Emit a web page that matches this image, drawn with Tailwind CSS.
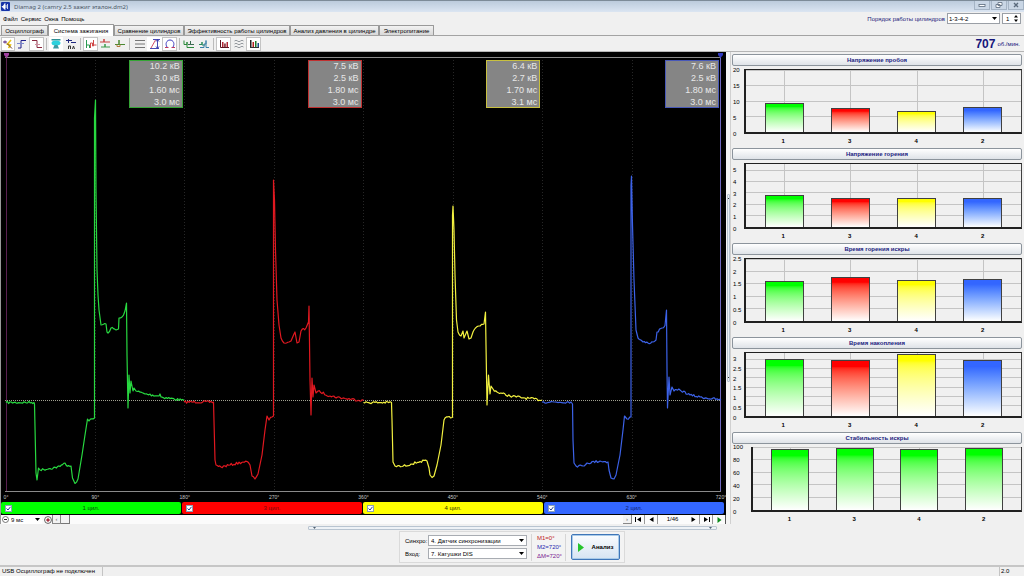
<!DOCTYPE html>
<html lang="ru">
<head>
<meta charset="utf-8">
<title>Diamag 2</title>
<script src="https://cdn.jsdelivr.net/npm/@tailwindcss/browser@4"></script>
</head>
<body>
<div class="flex h-screen w-full flex-col overflow-hidden bg-[#f0f0f0] text-[6px] leading-[8px] text-black" style="font-family:'Liberation Sans',Arial,sans-serif">

  <!-- title bar -->
  <header class="flex h-3 shrink-0 items-center border-t border-[#7d8b98] bg-linear-to-b from-[#bccbdc] to-[#dbe5f2] pl-px">
    <svg class="h-[9px] w-[9px]" viewBox="0 0 9 9"><rect width="9" height="9" rx="1" fill="#1733a8"/><path d="M1 4.500h1L4 1.500v6zM5 3v3M6.500 2v5" stroke="#fff" stroke-width=".8" fill="#fff"/></svg>
    <h1 class="ml-1 flex-1 text-[6px] text-[#4c5868]" style="font-family:'Noto Sans',sans-serif">Diamag 2 (camry 2.5 зажиг эталон.dm2)</h1>
    <div class="flex h-[9px] gap-px self-start text-[#5a6a7c]">
      <button aria-label="Свернуть" class="grid w-4 place-items-center border border-t-0 border-[#a5b4c5] bg-[#c9d6e5]"><svg class="h-[6px] w-[8px]" viewBox="0 0 8 6"><rect x="1" y="2.5" width="6" height="2" fill="#fff" stroke="currentColor" stroke-width=".8"/></svg></button>
      <button aria-label="Восстановить" class="grid w-4 place-items-center border border-t-0 border-[#a5b4c5] bg-[#c9d6e5]"><svg class="h-[6px] w-[8px]" viewBox="0 0 8 6"><path d="M3 .5h4v3H3zM1 2.500h4v3H1z" fill="#fff" stroke="currentColor" stroke-width=".8"/></svg></button>
      <button aria-label="Закрыть" class="grid w-4 place-items-center border border-t-0 border-[#a5b4c5] bg-[#c9d6e5]"><svg class="h-[6px] w-[8px]" viewBox="0 0 8 6"><path d="M2 1l4 4M6 1L2 5" stroke="currentColor" stroke-width="1.400"/></svg></button>
    </div>
  </header>

  <!-- menu and firing order -->
  <div class="flex h-[13px] shrink-0 items-center pl-[3px] pr-[3px]">
    <nav class="flex flex-1 gap-[3px] pt-px">
      <button>Файл</button><button>Сервис</button><button>Окна</button><button>Помощь</button>
    </nav>
    <label for="order" class="mr-[2px] text-[#1b1b7a]">Порядок работы цилиндров</label>
    <div class="relative h-[11px] w-[53px]">
      <select id="order" class="h-full w-full appearance-none border border-[#9a9fa6] bg-white pl-px leading-[8px]"><option>1-3-4-2</option></select>
      <svg class="pointer-events-none absolute top-1 right-[3px] h-[3px] w-[5px]" viewBox="0 0 5 3"><path d="M0 0h5L2.500 3z"/></svg>
    </div>
    <div class="relative ml-[2px] h-[11px] w-[19px]">
      <input aria-label="Цилиндр" value="1" class="h-full w-full border border-[#9a9fa6] bg-white pl-[3px]">
      <svg class="pointer-events-none absolute top-[2px] right-[3px] h-[7px] w-[4px]" viewBox="0 0 4 7"><path d="M0 2.500h4L2 0zM0 4.500h4L2 7z"/></svg>
    </div>
  </div>

  <!-- tabs -->
  <div role="tablist" class="flex h-[11px] shrink-0 items-end border-b border-[#a3a3a3] pl-px">
    <button role="tab" class="h-[10px] w-[47px] whitespace-nowrap rounded-t-[1px] border border-b-0 border-[#999] bg-linear-to-b from-[#f2f2f2] to-[#d8d8d8]">Осциллограф</button>
    <button role="tab" aria-selected="true" class="-mb-px h-3 w-[66px] whitespace-nowrap rounded-t-[1px] border border-b-0 border-[#999] bg-white">Система зажигания</button>
    <button role="tab" class="h-[10px] w-[70px] whitespace-nowrap rounded-t-[1px] border border-b-0 border-[#999] bg-linear-to-b from-[#f2f2f2] to-[#d8d8d8]">Сравнение цилиндров</button>
    <button role="tab" class="h-[10px] w-[106px] whitespace-nowrap rounded-t-[1px] border border-b-0 border-[#999] bg-linear-to-b from-[#f2f2f2] to-[#d8d8d8]">Эффективность работы цилиндров</button>
    <button role="tab" class="h-[10px] w-[89px] whitespace-nowrap rounded-t-[1px] border border-b-0 border-[#999] bg-linear-to-b from-[#f2f2f2] to-[#d8d8d8]">Анализ давления в цилиндре</button>
    <button role="tab" class="h-[10px] w-[55px] whitespace-nowrap rounded-t-[1px] border border-b-0 border-[#999] bg-linear-to-b from-[#f2f2f2] to-[#d8d8d8]">Электропитание</button>
  </div>

  <!-- toolbar -->
  <div class="flex h-4 shrink-0 items-center border-b border-[#b5b5b5] pl-px">
    <div class="flex">
      <button aria-label="Захват" class="grid h-[14px] w-[14px] place-items-center border border-[#c4c4c4] bg-white"><svg class="h-3 w-3" viewBox="0 0 12 12" fill="none"><path d="M1 4h4M3 2.500v3" stroke="#5b2a86"/><path d="M9 2L5.500 6l3 1-2 3" stroke="#e6c31a" stroke-width="1.600"/><path d="M5 5.500l5 5" stroke="#6a3a20"/></svg></button>
      <button aria-label="Фронт" class="grid h-[14px] w-[14px] place-items-center"><svg class="h-3 w-3" viewBox="0 0 12 12" fill="none"><path d="M2 10h3V2.500h5" stroke="#20208c"/><path d="M1 5.500h7" stroke="#7a88d0"/></svg></button>
      <button aria-label="Спад" class="grid h-[14px] w-[15px] place-items-center border border-[#c4c4c4] bg-white"><svg class="h-3 w-3" viewBox="0 0 12 12" fill="none"><path d="M1 2.500h5V9.500h5" stroke="#8a2a40"/><path d="M4 6.500h5" stroke="#d090a0"/></svg></button>
    </div>
    <i class="mx-[2px] h-3 w-px bg-[#bbb]"></i>
    <div class="flex">
      <button aria-label="Монитор" class="grid h-[14px] w-[14px] place-items-center bg-white"><svg class="h-3 w-3" viewBox="0 0 12 12"><rect x="1.500" y="1" width="9" height="1.500" fill="#2f8f95"/><ellipse cx="6" cy="5" rx="4.500" ry="2.500" fill="#2cd0dc"/><path d="M4.500 7h3l1.500 3.500H3z" fill="#3a9aa4"/></svg></button>
      <button aria-label="Автомасштаб" class="grid h-[14px] w-[15px] place-items-center"><svg class="h-3 w-3" viewBox="0 0 12 12" fill="none"><path d="M1 2.500h6M3.500 1v4M6 4.500h5" stroke="#222a80"/><path d="M3.500 11V8h2v3M7.500 11l1-3 1 3" stroke="#333"/></svg></button>
    </div>
    <i class="mx-[2px] h-3 w-px bg-[#bbb]"></i>
    <div class="flex">
      <button aria-label="Импульсы" class="grid h-[14px] w-[15px] place-items-center border border-[#c4c4c4] bg-white"><svg class="h-3 w-3" viewBox="0 0 12 12" fill="none"><path d="M1.500 10V2v5h3v3" stroke="#2a9a50"/><path d="M5.500 10V5h2v3h1V2v5h3" stroke="#d04848"/></svg></button>
      <button aria-label="Наложение" class="grid h-[14px] w-[14px] place-items-center"><svg class="h-3 w-3" viewBox="0 0 12 12" fill="none"><path d="M1 4h4V1v3h6" stroke="#c84040"/><path d="M2 9h4V6v3h5" stroke="#3b9a4a"/></svg></button>
      <button aria-label="Один импульс" class="grid h-[14px] w-[15px] place-items-center"><svg class="h-3 w-3" viewBox="0 0 12 12" fill="none"><path d="M1 6.500h4V2v4.500h6" stroke="#4a8a32"/><path d="M3 6.500v2h3v-2" stroke="#b07a3a"/></svg></button>
    </div>
    <i class="mx-[2px] h-3 w-px bg-[#bbb]"></i>
    <div class="flex">
      <button aria-label="Линии" class="grid h-[14px] w-[15px] place-items-center"><svg class="h-3 w-3" viewBox="0 0 12 12"><path d="M1 2.500h10M1 6h10M1 9.500h10" stroke="#555" stroke-width=".8"/></svg></button>
      <button aria-label="Амплитуда" class="grid h-[14px] w-[15px] place-items-center bg-white"><svg class="h-3 w-3" viewBox="0 0 12 12" fill="none"><path d="M1 10.500h9M4 1.500h7M8.500 2v8M7 8.500l1.500 2 1.500-2M7 3.500l1.500-2 1.500 2" stroke="#3535ab" stroke-width=".9"/><path d="M2 10l4.500-8" stroke="#d2506a"/></svg></button>
      <button aria-label="Цикл" class="grid h-[14px] w-[15px] place-items-center border border-[#c4c4c4] bg-white"><svg class="h-3 w-3" viewBox="0 0 12 12" fill="none"><path d="M3 9C1 6 2.500 2 6 2s5 4 3 7" stroke="#3b3bc0"/><path d="M1 9.500h3.500M7.500 9.500H11" stroke="#c03a60"/></svg></button>
    </div>
    <i class="mx-[2px] h-3 w-px bg-[#bbb]"></i>
    <div class="flex">
      <button aria-label="Эталон" class="grid h-[14px] w-[14px] place-items-center"><svg class="h-3 w-3" viewBox="0 0 12 12" fill="none"><path d="M1 2.500v4h3V4v5.500h7" stroke="#2a8a3a"/><path d="M5 6.500h2.500V3v3.500H11" stroke="#3b6a50"/></svg></button>
      <button aria-label="Сравнить" class="grid h-[14px] w-[15px] place-items-center"><svg class="h-3 w-3" viewBox="0 0 12 12" fill="none"><path d="M1 6.500h3V4v3h3" stroke="#2a8a5a"/><path d="M2 9.500h4V6h2V2.500v7h3" stroke="#3a80a8"/></svg></button>
    </div>
    <i class="mx-[2px] h-3 w-px bg-[#bbb]"></i>
    <div class="flex">
      <button aria-label="Гистограмма" class="grid h-[14px] w-[15px] place-items-center border border-[#c4c4c4] bg-white"><svg class="h-3 w-3" viewBox="0 0 12 12"><path d="M2.500 2v7.500H11" stroke="#5a1420" fill="none"/><path d="M4 4h1.500v5H4zM8.500 4H10v5H8.500z" fill="#b32634"/><path d="M6.200 5.500h1.500V9H6.200z" fill="#702028"/></svg></button>
      <button aria-label="Осциллограммы" class="grid h-[14px] w-[15px] place-items-center"><svg class="h-3 w-3" viewBox="0 0 12 12" fill="none"><path d="M1.500 3q1.500-1.500 3 0t3 0 3 0M1.500 6q1.500-1.500 3 0t3 0 3 0M1.500 9q1.500-1.500 3 0t3 0 3 0" stroke="#8a9095" stroke-width=".9"/></svg></button>
      <button aria-label="Цветные столбцы" class="grid h-[14px] w-[15px] place-items-center border border-[#c4c4c4] bg-white"><svg class="h-3 w-3" viewBox="0 0 12 12"><path d="M2 2h1.500v7H2z" fill="#222"/><path d="M4.500 4H6v5H4.500z" fill="#b32020"/><path d="M7 3h1.500v6H7z" fill="#1c7a2c"/><path d="M9.500 5H11v4H9.500z" fill="#1c4a8c"/><path d="M2 9.500h9" stroke="#333"/></svg></button>
    </div>
    <div class="ml-auto flex items-center gap-[2px] pr-1 text-[#15157a]">
      <strong class="text-[12px] leading-3">707</strong><span class="text-[6px]">об./мин.</span>
    </div>
  </div>

  <!-- work area -->
  <main class="flex min-h-0 flex-1 border-l border-[#9a9a9a]">
    <div class="flex min-w-0 flex-1 flex-col">
      <section class="relative min-h-0 flex-1 bg-black">
        <svg id="scope" class="absolute inset-0 h-full w-full" viewBox="1 52 725 449" preserveAspectRatio="none" fill="none">
          <path d="M95.500 57V491M184.500 57V491M274.500 57V491M363.500 57V491M453.500 57V491M542.500 57V491M632.500 57V491" stroke="#262626" stroke-dasharray="1 2"/>
          <path d="M5 57.500H721M5 491.500H721" stroke="#8a8a8a"/>
          <path d="M5 400.500H721" stroke="#a0a090" stroke-dasharray="1 1"/>
          <path d="M6.500 57V491" stroke="#5a2050"/>
          <path d="M720.500 57V491" stroke="#7068c0"/>
          <path d="M4 53h5v2L6.500 58 4 55z" fill="#a040a0"/>
          <path d="M718 53h5v2L720.500 58 718 55z" fill="#3038c0"/>
        </svg>
        <div class="absolute inset-x-[5px] top-2 grid grid-cols-4 text-right text-[9px] leading-3 text-[#e8e8e8]">
          <div class="ml-auto mr-[2px] w-[54px] bg-[#858585] pr-[3px] ring-1 ring-[#35a535] ring-inset">10.2 кВ<br>3.0 кВ<br>1.60 мс<br>3.0 мс</div>
          <div class="ml-auto mr-[2px] w-[54px] bg-[#858585] pr-[3px] ring-1 ring-[#c03030] ring-inset">7.5 кВ<br>2.5 кВ<br>1.80 мс<br>3.0 мс</div>
          <div class="ml-auto mr-[2px] w-[54px] bg-[#858585] pr-[3px] ring-1 ring-[#c8c040] ring-inset">6.4 кВ<br>2.7 кВ<br>1.70 мс<br>3.1 мс</div>
          <div class="ml-auto mr-[2px] w-[54px] bg-[#858585] pr-[3px] ring-1 ring-[#4858b8] ring-inset">7.6 кВ<br>2.5 кВ<br>1.80 мс<br>3.0 мс</div>
        </div>
        <div class="absolute inset-x-[5px] bottom-0 flex justify-between text-[5px] text-[#c8c8c8]">
          <span class="flex w-0 justify-center">0°</span><span class="flex w-0 justify-center">90°</span><span class="flex w-0 justify-center">180°</span><span class="flex w-0 justify-center">270°</span><span class="flex w-0 justify-center">360°</span><span class="flex w-0 justify-center">450°</span><span class="flex w-0 justify-center">540°</span><span class="flex w-0 justify-center">630°</span><span class="flex w-0 justify-center">720°</span>
        </div>
      </section>

      <!-- cylinder switches -->
      <div class="grid h-[14px] shrink-0 grid-cols-4 gap-px bg-black py-px pr-[2px]">
        <label class="relative flex items-center justify-center rounded-[2px] bg-[#00ff00] text-[#064d06]"><input type="checkbox" checked class="absolute left-1 h-[7px] w-[7px] appearance-none border border-[#8aa0b8] bg-white"><svg class="pointer-events-none absolute left-[5px] h-[5px] w-[5px]" viewBox="0 0 5 5"><path d="M.5 2.500L2 4 4.500.8" stroke="#24408c" fill="none"/></svg>1 цил.</label>
        <label class="relative flex items-center justify-center rounded-[2px] bg-[#ff0000] text-[#7a0a0a]"><input type="checkbox" checked class="absolute left-1 h-[7px] w-[7px] appearance-none border border-[#8aa0b8] bg-white"><svg class="pointer-events-none absolute left-[5px] h-[5px] w-[5px]" viewBox="0 0 5 5"><path d="M.5 2.500L2 4 4.500.8" stroke="#24408c" fill="none"/></svg>3 цил.</label>
        <label class="relative flex items-center justify-center rounded-[2px] bg-[#ffff00] text-[#303000]"><input type="checkbox" checked class="absolute left-1 h-[7px] w-[7px] appearance-none border border-[#8aa0b8] bg-white"><svg class="pointer-events-none absolute left-[5px] h-[5px] w-[5px]" viewBox="0 0 5 5"><path d="M.5 2.500L2 4 4.500.8" stroke="#24408c" fill="none"/></svg>4 цил.</label>
        <label class="relative flex items-center justify-center rounded-[2px] bg-[#3366ff] text-[#10206a]"><input type="checkbox" checked class="absolute left-1 h-[7px] w-[7px] appearance-none border border-[#8aa0b8] bg-white"><svg class="pointer-events-none absolute left-[5px] h-[5px] w-[5px]" viewBox="0 0 5 5"><path d="M.5 2.500L2 4 4.500.8" stroke="#24408c" fill="none"/></svg>2 цил.</label>
      </div>

      <!-- sweep and frame navigation -->
      <div class="flex h-[9px] shrink-0 items-stretch bg-[#fbfbfb]">
        <button aria-label="Уменьшить" class="grid w-2 place-items-center"><svg class="h-[7px] w-[7px]" viewBox="0 0 7 7"><circle cx="3.500" cy="3.500" r="3" fill="#fff" stroke="#555" stroke-width=".8"/><path d="M2 3.500h3" stroke="#222"/></svg></button>
        <div class="relative w-[33px]">
          <select aria-label="Развёртка" class="h-full w-full appearance-none bg-white pl-[2px] leading-[8px]"><option>9 мс</option></select>
          <svg class="pointer-events-none absolute top-[3px] right-[2px] h-[3px] w-[5px]" viewBox="0 0 5 3"><path d="M0 0h5L2.500 3z"/></svg>
        </div>
        <button aria-label="Увеличить" class="ml-px grid w-[9px] place-items-center"><svg class="h-[8px] w-[8px]" viewBox="0 0 7 7"><circle cx="3.500" cy="3.500" r="3" fill="#fff" stroke="#555" stroke-width=".8"/><path d="M2 3.500h3M3.500 2v3" stroke="#a02030" stroke-width="1.200"/></svg></button>
        <button aria-label="Влево" class="w-[9px] border-r border-b border-l border-[#888] bg-[#f3f3f3] text-[#666]">‹</button>
        <div class="w-[9px] border-r border-b border-[#777] bg-[#f3f3f3]"></div>
        <div class="flex-1"></div>
        <button aria-label="Вправо" class="w-[9px] border-r border-b border-[#888] bg-[#f3f3f3] text-[#666]">›</button>
        <button aria-label="Первый" class="grid w-[13px] place-items-center border-r border-[#999]"><svg class="h-[5px] w-[7px]" viewBox="0 0 7 5"><path d="M0 0h1v5H0zM6 0v5L2 2.500z"/></svg></button>
        <button aria-label="Назад" class="grid w-[13px] place-items-center border-r border-[#999]"><svg class="h-[5px] w-[5px]" viewBox="0 0 5 5"><path d="M4.500 0v5L.5 2.500z"/></svg></button>
        <output class="w-[29px] text-center leading-[9px]">1/46</output>
        <button aria-label="Вперёд" class="grid w-[13px] place-items-center border-r border-[#999]"><svg class="h-[5px] w-[5px]" viewBox="0 0 5 5"><path d="M.5 0v5l4-2.500z"/></svg></button>
        <button aria-label="Последний" class="grid w-[13px] place-items-center border-r border-[#999]"><svg class="h-[5px] w-[7px]" viewBox="0 0 7 5"><path d="M6 0h1v5H6zM1 0v5l4-2.500z"/></svg></button>
        <button aria-label="Пуск" class="grid w-[13px] place-items-center border-r border-[#555]"><svg class="h-[6px] w-[5px]" viewBox="0 0 5 6"><path d="M.5 0v6l4-3z" fill="#0c8a1c"/></svg></button>
      </div>
    </div>

    <div class="flex w-1 shrink-0 items-center justify-center bg-[#f4f4f4]">
      <div class="flex h-[188px] w-[3px] flex-col justify-between rounded-[1px] border border-[#b6c2cf] bg-[#e9eef4] py-[3px]"><i class="h-px w-px bg-[#333]"></i><i class="h-px w-px bg-[#333]"></i></div>
    </div>

    <aside id="charts" class="flex w-[294px] shrink-0 flex-col border-l border-[#d0d0d0] pl-px pr-[2px]"></aside>
  </main>

  <!-- horizontal splitter -->
  <div class="flex h-[7px] shrink-0 items-center pl-[308px] pr-[307px]">
    <div class="flex h-1 flex-1 items-center justify-between rounded-[1px] border border-[#b8c4d0] bg-[#eef2f6] px-1 text-[#506070]"><svg class="h-[2px] w-[3px]" viewBox="0 0 3 2"><path d="M0 0h3L1.500 2z" fill="currentColor"/></svg><svg class="h-[2px] w-[3px]" viewBox="0 0 3 2"><path d="M0 0h3L1.500 2z" fill="currentColor"/></svg></div>
  </div>

  <!-- inputs -->
  <section class="flex h-9 shrink-0 justify-center border-b-2 border-[#c6c6c6]">
    <div class="flex h-8 w-[226px] items-center border border-[#dadada] bg-[#f3f3f3] pl-[5px]">
      <div class="grid grid-cols-[23px_99px] items-center gap-y-[2px]">
        <label for="sync">Синхро:</label>
        <div class="relative h-[11px]"><select id="sync" class="h-full w-full appearance-none border border-[#a8acb2] bg-white pl-[2px] leading-[8px]"><option>4.  Датчик синхронизации</option></select><svg class="pointer-events-none absolute top-1 right-[3px] h-[3px] w-[5px]" viewBox="0 0 5 3"><path d="M0 0h5L2.500 3z"/></svg></div>
        <label for="inp">Вход:</label>
        <div class="relative h-[11px]"><select id="inp" class="h-full w-full appearance-none border border-[#a8acb2] bg-white pl-[2px] leading-[8px]"><option>7.  Катушки DIS</option></select><svg class="pointer-events-none absolute top-1 right-[3px] h-[3px] w-[5px]" viewBox="0 0 5 3"><path d="M0 0h5L2.500 3z"/></svg></div>
      </div>
      <div class="ml-1 h-[27px] w-[35px] border-x border-[#d6d6d6] pl-[5px] leading-[9px]">
        <p class="text-[#c02020]">M1=0°</p><p class="text-[#2828b0]">M2=720°</p><p class="text-[#7a1a90]">ΔM=720°</p>
      </div>
      <button class="ml-[5px] flex h-[26px] w-[49px] items-center justify-center gap-2 rounded-[2px] border border-[#3f76b8] bg-linear-to-b from-[#fafcfe] to-[#d6e4f2] font-bold ring-1 ring-[#a9cbe9] ring-inset"><svg class="h-[9px] w-[6px]" viewBox="0 0 6 9"><path d="M0 0l6 4.500L0 9z" fill="#25c42c"/></svg>Анализ</button>
    </div>
  </section>

  <!-- status bar -->
  <footer class="flex h-[9px] shrink-0 items-center bg-[#f0f0f0]">
    <span class="h-full w-[103px] border-r border-[#c4c4c4] pl-[2px]">USB Осциллограф не подключен</span>
    <span class="ml-auto h-full w-[25px] border-l border-[#c4c4c4] pl-px">2.0</span>
  </footer>
</div>

<script>
// Ignition traces: [x, y] pairs in scope coordinates.
const traces = [
  ['#28d840', [6,402.5,34,402.5,34.5,404,36,473,37,480,38.5,468,40,470,50,468.5,60,466.5,65,463,66,465,71,466,72.5,478,75,483.5,78,479,82,455,85,435,87.5,419,89,421,94.5,418,94.5,118,95.5,100,96,190,97,270,98,295,99,310,101,325,106,324,107,332,108,333,111,328,116,330,118.5,329,119,318,122,317,125,311,126.5,303,127,355,128,408,129,375,130,393,131,381,133,391,134,388,136,391,145,394,159,396,160,394,161,397,184,400.5]],
  ['#e01820', [184,402,213.5,402,215,460,216,465,221,467,230,465,243,462,247,461.5,250,465,252,476,255,479,258,474,262,455,265,430,267,416,269,420,272,417,273.5,416,273.5,180,274.5,200,275.5,250,277,300,279,325,281,338,284,343,289,342,291,341,294,334,295,332,297,343,299,342,301,331,306,328,308.5,322,309,306,310,380,311,415,312,378,313,397,314,385,316,393,318,391,330,396,345,398.5,363.5,400.5]],
  ['#f2f040', [363.5,402.5,391.5,402.5,392,420,393,462,395,466,402,466.5,411,464,420,461.5,427,461,429,468,430,475,432,477.5,434,476,437,465,441,445,444,420,445,418,452,417.5,452.5,417,452.5,215,453,206,454,230,455,275,456.5,320,458,332,461,336,463,331,464,338,467,331,469,339,471,338,473,332,474,330,479,326,484,324,485.5,312,486,345,487,405,488.5,375,490,394,491,386,493,389,497,392,510,396,525,398,542,400]],
  ['#3c62e8', [542,402,571,402,572.5,404,573,440,574,463,576,466,583,466,587,463,600,461,608,462,609,470,611,478,614,479,616,475,620,455,623,430,624.5,416,627,419,631,417,631,185,631.5,176,632.5,225,634,280,636,330,638,338,643,342,648,343,653,342,656,340,657,332,662,328,665,325.5,666.5,310,667,370,667.5,408,669,377,670,395,672,387,674,391,680,390,690,395,700,397,721,400]]
];
let seed = 7;
const noise = () => ((seed = (seed * 16807) % 2147483647) / 2147483647 - 0.5) * 2.4;
const scope = document.getElementById('scope');
for (const [color, p] of traces) {
  let d = `M${p[0]} ${p[1]}`;
  for (let i = 2; i < p.length; i += 2) {
    const dx = p[i] - p[i - 2], dy = p[i + 1] - p[i - 1];
    const n = dx > 2.5 && Math.abs(dy) < 7 ? Math.round(dx / 1.3) : 1;
    for (let k = 1; k < n; k++) d += `L${p[i - 2] + dx * k / n} ${p[i - 1] + dy * k / n + noise()}`;
    d += `L${p[i]} ${p[i + 1]}`;
  }
  const path = document.createElementNS('http://www.w3.org/2000/svg', 'path');
  path.setAttribute('d', d);
  path.setAttribute('stroke', color);
  path.setAttribute('stroke-width', '1.2');
  path.setAttribute('stroke-linejoin', 'round');
  scope.appendChild(path);
}

// Bar charts: title, axis maximum, tick values, bar values, axis width, colours.
const G = 'bg-linear-to-b from-[#00ff00] from-10% to-white', R = 'bg-linear-to-b from-[#ff0000] from-10% to-white',
      Y = 'bg-linear-to-b from-[#ffff00] from-10% to-white', B = 'bg-linear-to-b from-[#3366ff] from-10% to-white';
const four = [G, R, Y, B];
const charts = [
  ['Напряжение пробоя', 20.2, [0, 5, 10, 15, 20], [9.4, 7.9, 6.8, 8.1], 'w-3', four],
  ['Напряжение горения', 5.6, [0, 1, 2, 3, 4, 5], [2.9, 2.6, 2.6, 2.6], 'w-3', four],
  ['Время горения искры', 2.53, [0, 0.5, 1, 1.5, 2, 2.5], [1.63, 1.78, 1.67, 1.71], 'w-3', four],
  ['Время накопления', 3.35, [0, 0.5, 1, 1.5, 2, 2.5, 3], [3.03, 3, 3.32, 3], 'w-3', four],
  ['Стабильность искры', 100, [0, 20, 40, 60, 80, 100], [98, 100, 98, 100], 'w-[19px]', [G, G, G, G]]
];
document.getElementById('charts').innerHTML = charts.map(([title, max, ticks, vals, axis, colors]) => `
  <section class="flex min-h-0 flex-1 flex-col pt-[2px]">
    <button class="mb-[3px] h-3 shrink-0 rounded-[2px] border border-[#8c949c] bg-linear-to-b from-white to-[#dfe3e8] text-[6px] font-bold text-[#1c1c80]">${title}</button>
    <div class="flex min-h-0 flex-1">
      <div class="relative ${axis} shrink-0">${ticks.map(t => `<span class="absolute left-px translate-y-1/2 text-[6px]" style="bottom:${t / max * 100}%">${t}</span>`).join('')}</div>
      <div class="relative grid flex-1 grid-cols-4 border-2 border-t border-r border-[#202020] border-r-[#404040] px-[5px]">
        ${ticks.slice(1).map(t => `<i class="absolute inset-x-0 h-px bg-[#c4c4c4]" style="bottom:${t / max * 100}%"></i>`).join('')}
        ${vals.map((v, i) => `<div class="relative flex items-end justify-center"><i class="absolute inset-y-0 left-1/2 w-px bg-[#c4c4c4]"></i><div class="relative w-[59%] border border-b-0 border-[#404040] ${colors[i]}" style="height:${v / max * 100}%"></div></div>`).join('')}
      </div>
    </div>
    <div class="flex h-3 shrink-0"><div class="${axis}"></div><div class="grid flex-1 grid-cols-4 px-[6px] pt-[3px] text-center text-[6px] font-bold"><span>1</span><span>3</span><span>4</span><span>2</span></div></div>
  </section>`).join('');
</script>
</body>
</html>
